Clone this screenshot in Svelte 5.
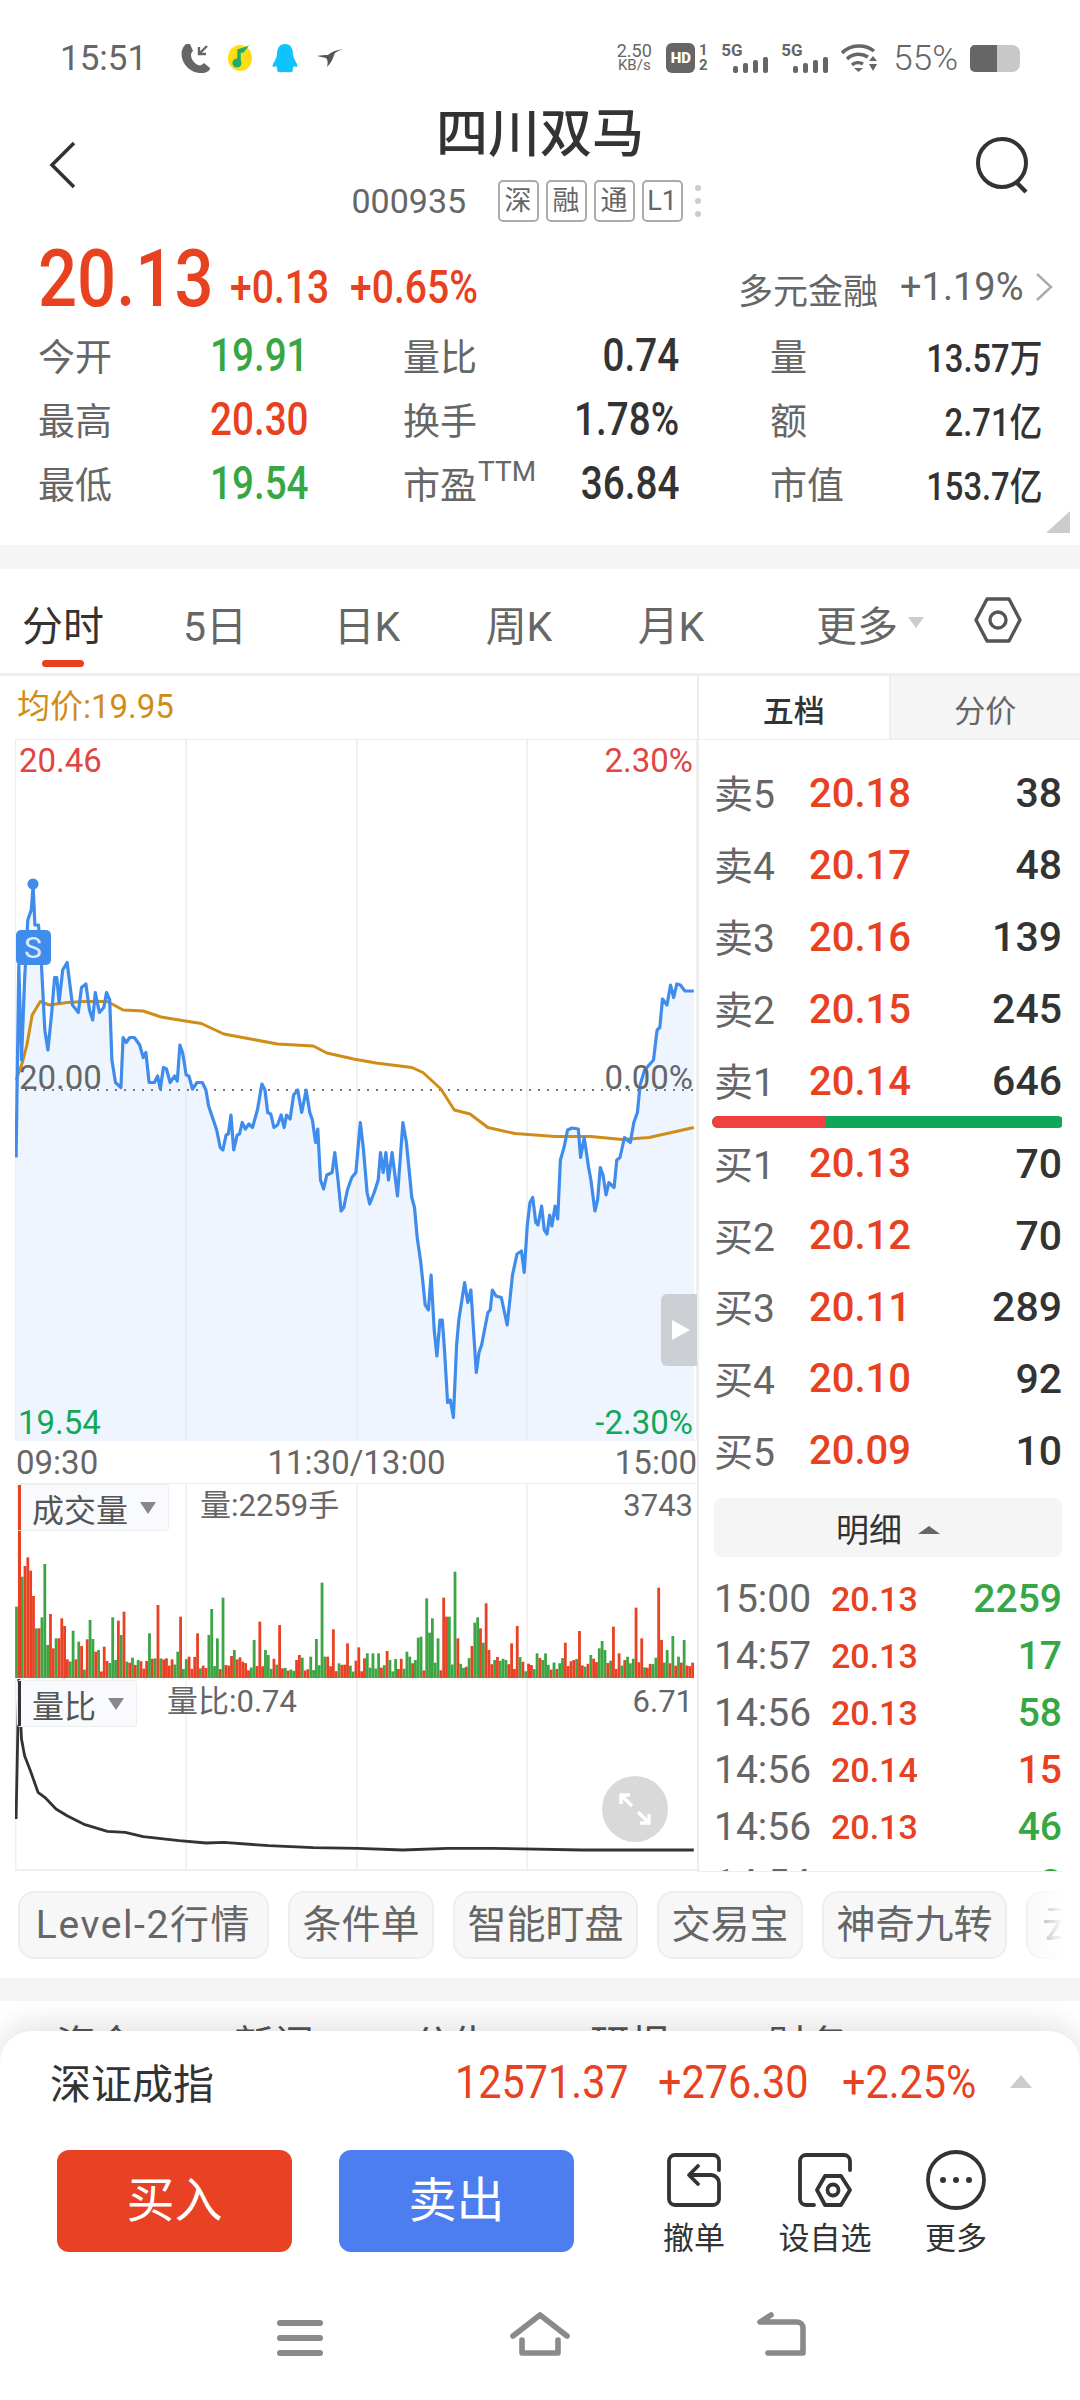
<script>
  const sx = 2.234;

  const stats = [
    [["今开", "19.91", "g"], ["量比", "0.74", ""], ["量", "13.57万", ""]],
    [["最高", "20.30", "r"], ["换手", "1.78%", ""], ["额", "2.71亿", ""]],
    [["最低", "19.54", "g"], ["市盈", "36.84", "", "TTM"], ["市值", "153.7亿", ""]]
  ];

  const tabs = ["分时", "5日", "日K", "周K", "月K"];

  const sells = [
    ["卖5", "20.18", "38"],
    ["卖4", "20.17", "48"],
    ["卖3", "20.16", "139"],
    ["卖2", "20.15", "245"],
    ["卖1", "20.14", "646"]
  ];
  const buys = [
    ["买1", "20.13", "70"],
    ["买2", "20.12", "70"],
    ["买3", "20.11", "289"],
    ["买4", "20.10", "92"],
    ["买5", "20.09", "10"]
  ];
  const ticks = [
    ["15:00", "20.13", "2259", "g"],
    ["14:57", "20.13", "17", "g"],
    ["14:56", "20.13", "58", "g"],
    ["14:56", "20.14", "15", "r"],
    ["14:56", "20.13", "46", "g"],
    ["14:54", "20.13", "3", "g"]
  ];

  const chips = [
    ["Level-2行情", 251],
    ["条件单", 146],
    ["智能盯盘", 185],
    ["交易宝", 146],
    ["神奇九转", 185],
    ["云", 120]
  ];

  // traced from the reference, in crop coordinates
  const priceRaw = [36,915,42,530,48,720,55,560,62,440,70,420,74,370,78,450,86,450,92,520,100,660,107,700,115,630,122,555,127,555,132,605,140,540,150,525,162,610,175,625,182,575,192,568,200,620,207,640,213,585,222,625,232,615,238,585,245,600,250,720,258,765,270,775,275,675,282,685,290,675,300,675,312,690,320,715,326,705,333,765,345,765,352,752,358,778,365,735,372,738,380,765,390,752,396,762,402,690,408,705,416,750,422,752,430,778,440,765,452,765,460,780,466,812,484,860,492,895,498,900,505,870,510,868,516,830,522,900,530,870,535,868,541,845,548,858,556,848,564,855,575,820,585,768,592,780,598,825,605,828,612,855,620,850,628,830,635,855,640,830,648,838,656,790,665,780,674,825,684,780,692,825,698,840,705,885,710,858,716,960,723,978,730,950,742,945,748,905,755,960,762,1022,768,1015,776,980,786,955,795,945,805,845,812,900,820,985,826,1008,836,985,845,960,850,905,856,945,862,905,868,960,876,905,888,992,900,845,908,885,920,995,926,1015,932,1075,940,1125,950,1210,957,1220,963,1150,970,1260,976,1312,983,1240,988,1240,993,1300,1000,1405,1006,1400,1013,1435,1020,1290,1025,1240,1038,1165,1045,1205,1052,1180,1064,1345,1070,1305,1076,1290,1090,1225,1095,1220,1100,1180,1108,1192,1120,1195,1133,1250,1145,1150,1155,1108,1165,1102,1171,1145,1178,1050,1184,1005,1190,995,1197,1045,1202,1050,1210,1012,1216,1060,1222,1068,1228,1030,1233,1052,1240,1012,1246,1038,1252,920,1260,895,1268,860,1278,856,1292,858,1297,915,1305,875,1315,935,1320,960,1329,1022,1335,1000,1341,935,1347,950,1354,990,1360,965,1372,975,1378,920,1385,915,1395,875,1408,885,1416,845,1424,825,1430,770,1440,740,1460,720,1468,660,1474,655,1480,598,1490,610,1498,570,1505,595,1512,568,1520,570,1530,582,1550,582];
  const avgRaw = [36,760,50,725,60,690,72,630,90,603,110,610,150,605,190,603,240,603,275,620,320,622,360,634,400,640,450,647,500,668,560,678,620,688,700,692,730,706,790,718,840,726,920,735,945,745,985,778,1015,820,1050,828,1090,855,1150,867,1240,873,1320,873,1390,879,1450,875,1550,855];
  const ratioRaw = [36,1080,42,660,48,840,55,890,68,935,85,1000,100,1015,125,1050,150,1070,190,1097,240,1117,280,1120,320,1133,400,1145,460,1152,500,1150,600,1160,700,1166,800,1168,900,1173,1000,1168,1100,1168,1300,1173,1550,1173];

  const toPts = (raw, yf) => {
    const out = [];
    for (let i = 0; i < raw.length; i += 2) {
      out.push(`${(raw[i] / sx - 15).toFixed(1)},${yf(raw[i + 1]).toFixed(1)}`);
    }
    return out.join(" ");
  };

  const priceY = z => z / 2 + 700 - 739;
  const price = toPts(priceRaw, priceY);
  const avg = toPts(avgRaw, priceY);
  const area = `1,702 ${price} 679,702`;
  const ratio = toPts(ratioRaw, z => 1460 + z / 3 - 1680);

  const reds = [43,215,55,318,62,292,68,332,75,408,86,505,112,462,120,565,130,535,137,475,144,498,152,598,170,598,182,558,195,538,210,575,232,560,265,482,276,455,328,603,352,435,368,595,385,598,403,470,420,590,440,520,505,615,515,588,525,600,540,605,578,485,622,495,660,600,668,585,730,590,742,508,775,550,800,562,862,573,988,413,998,470,1020,535,1052,558,1070,505,1083,430,1090,570,1140,550,1152,498,1185,615,1265,548,1280,600,1291,513,1367,500,1380,580,1417,443,1430,535,1468,383,1480,540,1500,480,1550,300];
  const greens = [37,440,48,350,82,505,94,472,100,312,106,555,127,535,162,512,175,545,200,480,207,537,220,570,250,472,258,600,268,525,282,605,307,600,333,520,395,575,445,625,463,525,472,447,485,535,497,413,520,570,565,540,592,570,600,585,695,590,705,537,717,368,722,590,755,610,817,580,830,580,845,580,882,597,905,575,912,590,932,533,940,530,950,415,957,518,968,475,975,535,1005,470,1013,335,1060,488,1065,472,1076,548,1106,600,1128,600,1197,580,1210,600,1220,580,1305,620,1322,585,1335,565,1347,543,1353,570,1405,610,1490,570,1505,528,1518,590,1528,540];

  const barStep = 6.32;
  const bars = [];
  for (let i = 0; i < 240; i++) {
    const n = Math.abs(Math.sin(i * 12.9898) * 43758.5453) % 1;
    const m = Math.abs(Math.sin(i * 78.233) * 12543.37) % 1;
    bars.push({ top: 590 + n * 45, red: m > 0.45 });
  }
  const mark = (list, red) => {
    for (let i = 0; i < list.length; i += 2) {
      const k = Math.round((list[i] - 36) / barStep);
      if (bars[k]) bars[k] = { top: list[i + 1], red };
    }
  };
  mark(reds, true);
  mark(greens, false);
  const volBars = bars.map((b, i) => {
    const y = 1460 + b.top / 3 - 1483;
    return { x: (36 + i * barStep) / sx - 15 - 1, y, h: 195 - y, red: b.red };
  });
</script>

<div class="page">
  <div class="status">
    <span class="clock">15:51</span>
    <svg class="ic-phone" viewBox="0 0 30 30" width="30" height="30">
      <path d="M6 1 C1 5 0 13 4 20 C8 27 16 31 24 30 C28 29 30 27 30 25 L24 20 C22 22 20 23 18 22 C14 20 11 16 11 12 C11 10 12 9 13 8 L10 1 Z" fill="#666" />
      <path d="M27 3 L19 11 M19 4 V11 H26" fill="none" stroke="#666" stroke-width="2.4" />
    </svg>
    <svg class="ic-music" viewBox="0 0 24 26" width="24" height="26">
      <ellipse cx="12" cy="13" rx="12" ry="13" fill="#ffdc14" />
      <path d="M10 16 V5 L19 2 L15 7 L12 7 V18" fill="#1fae6a" stroke="#1fae6a" stroke-width="1.5" />
      <circle cx="9" cy="18" r="4.6" fill="#1fae6a" />
    </svg>
    <svg class="ic-qq" viewBox="0 0 26 29" width="26" height="29">
      <path d="M13 0 C7 0 5 5 5 10 C5 13 3 16 1 20 C0 23 1 24 4 22 C5 24 6 26 5 27 C7 29 10 28 13 28 C16 28 19 29 21 27 C20 26 21 24 22 22 C25 24 26 23 25 20 C23 16 21 13 21 10 C21 5 19 0 13 0 Z" fill="#10c4fb" />
    </svg>
    <svg class="ic-bird" viewBox="0 0 26 18" width="26" height="18">
      <path d="M0 7 C4 6 8 6 11 6 C14 3 19 1 26 0 C21 2 18 3 17 6 C16 10 14 14 10 18 C11 14 11 11 9 9 C6 8 3 8 0 7 Z" fill="#555" />
    </svg>

    <span class="speed"><b>2.50</b><i>KB/s</i></span>
    <span class="hd">HD</span>
    <span class="sim"><b>1</b><b>2</b></span>
    <span class="sig first">
      <b>5G</b>
      <svg viewBox="0 0 35 16" width="35" height="16"><rect x="0" y="9" width="5" height="7" rx="2" /><rect x="10" y="6" width="5" height="10" rx="2" /><rect x="20" y="3" width="5" height="13" rx="2" /><rect x="30" y="0" width="5" height="16" rx="2" /></svg>
    </span>
    <span class="sig">
      <b>5G</b>
      <svg viewBox="0 0 35 16" width="35" height="16"><rect x="0" y="9" width="5" height="7" rx="2" /><rect x="10" y="6" width="5" height="10" rx="2" /><rect x="20" y="3" width="5" height="13" rx="2" /><rect x="30" y="0" width="5" height="16" rx="2" /></svg>
    </span>
    <svg class="ic-wifi" viewBox="0 0 36 28" width="36" height="28">
      <path d="M1 9 C10 0 24 0 33 7 M6 15 C12 9 21 9 27 13 M11 21 C14 18 19 18 22 20" fill="none" stroke="#666" stroke-width="3.4" />
      <path d="M13 24 H22 L17.5 28 Z M28 17 H36 L32 12 Z M28 20 H36 L32 27 Z" fill="#666" />
    </svg>
    <span class="batt-txt">55%</span>
    <span class="batt"><span class="batt-fill"></span></span>
  </div>

  <div class="head">
    <svg class="back" viewBox="0 0 30 48" width="30" height="48">
      <path d="M26 2 L4 24 L26 46" fill="none" stroke="#333" stroke-width="3.6" />
    </svg>
    <div class="head-mid">
      <div class="title">四川双马</div>
      <div class="code-row">
        <span class="code">000935</span>
        <span class="tag">深</span>
        <span class="tag">融</span>
        <span class="tag">通</span>
        <span class="tag">L1</span>
        <span class="dots"><i></i><i></i><i></i></span>
      </div>
    </div>
    <svg class="search" viewBox="0 0 58 58" width="58" height="58">
      <circle cx="28" cy="27" r="24" fill="none" stroke="#333" stroke-width="4" />
      <path d="M42 46 L52 56" stroke="#333" stroke-width="4.4" />
    </svg>
  </div>

  <div class="quote">
    <div class="price-row">
      <span class="big"><span>20.13</span></span>
      <span class="chg c1"><span>+0.13</span></span>
      <span class="chg c2"><span>+0.65%</span></span>
      <span class="sector">多元金融</span>
      <span class="sector-v">+1.19%</span>
      <svg class="more" viewBox="0 0 18 30" width="18" height="30"><path d="M2 2 L16 15 L2 28" fill="none" stroke="#aaa" stroke-width="2.4" /></svg>
    </div>
    <div class="stats">
      {#each stats as row}
        <div class="stat-row">
          {#each row as s, i}
            <div class="stat s{i}">
              <span class="lab">{s[0]}{#if s[3]}<sup>{s[3]}</sup>{/if}</span>
              <span class="val {s[2]}">{s[1]}</span>
            </div>
          {/each}
        </div>
      {/each}
    </div>
    <svg class="corner" viewBox="0 0 24 22" width="24" height="22"><path d="M24 0 V22 H0 Z" fill="#ccc" /></svg>
  </div>

  <div class="band"></div>

  <div class="tabs">
    {#each tabs as t, i}
      <div class="tab" class:on={i === 0}>{t}</div>
    {/each}
    <div class="tab-more">更多<i></i></div>
    <svg class="hex" viewBox="0 0 50 48" width="50" height="48">
      <path d="M14 3 H36 L47 24 L36 45 H14 L3 24 Z" fill="none" stroke="#555" stroke-width="3.4" stroke-linejoin="round" />
      <circle cx="25" cy="24" r="8" fill="none" stroke="#555" stroke-width="3.4" />
    </svg>
  </div>

  <div class="main">
    <div class="left">
      <div class="avg">均价:19.95</div>

      <svg class="chart" viewBox="0 0 682 702" width="682" height="702">
        <rect x="0.5" y="0.5" width="681" height="701" fill="#fff" stroke="#eee" />
        <polygon points={area} fill="#eef5fe" />
        <path d="M171 0 V702 M342 0 V702 M512 0 V702" stroke="#e9ecef" stroke-width="1.5" fill="none" />
        <path d="M1 351 H681" stroke="#777" stroke-width="2" stroke-dasharray="2 7" fill="none" />
        <polyline points={avg} fill="none" stroke="#cf8d18" stroke-width="3" stroke-linejoin="round" />
        <polyline points={price} fill="none" stroke="#3f8cec" stroke-width="3.2" stroke-linejoin="round" />
        <ellipse cx="18" cy="145" rx="5.5" ry="5.5" fill="#3f8cec" />
        <rect x="1" y="191" width="35" height="35" rx="5" fill="#3f8cec" />
        <text x="18" y="219" class="s-mark" text-anchor="middle">S</text>
        <text x="4" y="33" class="tx red">20.46</text>
        <text x="678" y="33" class="tx red" text-anchor="end">2.30%</text>
        <text x="4" y="350" class="tx grey">20.00</text>
        <text x="678" y="350" class="tx grey" text-anchor="end">0.00%</text>
        <text x="3" y="695" class="tx green">19.54</text>
        <text x="678" y="695" class="tx green" text-anchor="end">-2.30%</text>
        <rect x="646" y="555" width="40" height="72" rx="6" fill="#ccd0d5" />
        <path d="M657 581 L675 591 L657 601 Z" fill="#fff" />
      </svg>

      <div class="times">
        <span>09:30</span>
        <span>11:30/13:00</span>
        <span>15:00</span>
      </div>

      <div class="sub vol">
        <svg viewBox="0 0 682 196" width="682" height="196">
          <path d="M171 0 V196 M342 0 V196 M512 0 V196" stroke="#eee" stroke-width="1.5" fill="none" />
          <path d="M0 0.5 H682" stroke="#eee" />
          {#each volBars as b}
            <rect x={b.x} y={b.y} width="2.8" height={b.h} fill={b.red ? "#e84124" : "#3ea545"} />
          {/each}
          <rect x="3" y="2" width="3" height="193" fill="#e84124" />
        </svg>
        <div class="ind">成交量<i></i></div>
        <div class="ind-v">量:2259手</div>
        <div class="ind-max">3743</div>
      </div>

      <div class="sub ratio">
        <svg viewBox="0 0 682 192" width="682" height="192">
          <path d="M171 0 V192 M342 0 V192 M512 0 V192" stroke="#eee" stroke-width="1.5" fill="none" />
          <path d="M0.5 0 V192 M0 191 H682" stroke="#eee" stroke-width="2" />
          <polyline points={ratio} fill="none" stroke="#333" stroke-width="2.8" stroke-linejoin="round" />
        </svg>
        <div class="ind">量比<i></i></div>
        <div class="ind-v">量比:0.74</div>
        <div class="ind-max">6.71</div>
        <div class="expand">
          <svg viewBox="0 0 44 44" width="44" height="44">
            <path d="M8 17 V8 H17 M8 8 L19 19 M36 27 V36 H27 M36 36 L25 25" fill="none" stroke="#fff" stroke-width="3.4" />
          </svg>
        </div>
      </div>
    </div>

    <div class="right">
      <div class="rtabs">
        <div class="rtab on">五档</div>
        <div class="rtab">分价</div>
      </div>
      <div class="book">
        {#each sells as r}
          <div class="ob"><span class="ob-l">{r[0]}</span><span class="ob-p">{r[1]}</span><span class="ob-q">{r[2]}</span></div>
        {/each}
        <div class="ratio-bar"><span></span></div>
        {#each buys as r}
          <div class="ob buy"><span class="ob-l">{r[0]}</span><span class="ob-p">{r[1]}</span><span class="ob-q">{r[2]}</span></div>
        {/each}
        <div class="detail">明细<i></i></div>
        {#each ticks as t}
          <div class="tick">
            <span class="t-time">{t[0]}</span>
            <span class="t-price">{t[1]}</span>
            <span class="t-qty {t[3]}">{t[2]}</span>
          </div>
        {/each}
      </div>
    </div>
  </div>

  <div class="chips">
    {#each chips as c}
      <div class="chip" style="width:{c[1]}px">{c[0]}</div>
    {/each}
    <div class="chip-fade"></div>
  </div>

  <div class="band b2"></div>

  <div class="peek">
    <span>资金</span><span>新闻</span><span>公告</span><span>研报</span><span>财务</span>
  </div>

  <div class="sheet">
    <div class="index">
      <span class="idx-name">深证成指</span>
      <span class="idx a"><span>12571.37</span></span>
      <span class="idx b"><span>+276.30</span></span>
      <span class="idx c"><span>+2.25%</span></span>
      <svg viewBox="0 0 22 13" width="22" height="13"><path d="M11 0 L22 13 H0 Z" fill="#ccc" /></svg>
    </div>
    <div class="actions">
      <div class="btn buy-btn">买入</div>
      <div class="btn sell-btn">卖出</div>
      <div class="act a1">
        <svg viewBox="0 0 54 54" width="54" height="54">
          <path d="M52 17 V8 A6 6 0 0 0 46 2 H8 A6 6 0 0 0 2 8 V46 A6 6 0 0 0 8 52 H46 A6 6 0 0 0 52 46 V30 A8 8 0 0 0 44 22 H24 M31 13 L22 22 L31 31" fill="none" stroke="#333" stroke-width="3.8" stroke-linecap="round" stroke-linejoin="round" />
        </svg>
        <span>撤单</span>
      </div>
      <div class="act a2">
        <svg viewBox="0 0 54 54" width="54" height="54">
          <path d="M52 17 V8 A6 6 0 0 0 46 2 H8 A6 6 0 0 0 2 8 V46 A6 6 0 0 0 8 52 H16" fill="none" stroke="#333" stroke-width="3.8" stroke-linecap="round" />
          <path d="M27 23 H43 L52 37 L43 52 H27 L19 37 Z" fill="none" stroke="#333" stroke-width="3.8" stroke-linejoin="round" />
          <circle cx="35" cy="37" r="5.5" fill="none" stroke="#333" stroke-width="3.8" />
        </svg>
        <span>设自选</span>
      </div>
      <div class="act a3">
        <svg viewBox="0 0 60 60" width="60" height="60">
          <circle cx="30" cy="30" r="28" fill="none" stroke="#333" stroke-width="3.8" />
          <circle cx="17" cy="30" r="3" fill="#333" /><circle cx="30" cy="30" r="3" fill="#333" /><circle cx="43" cy="30" r="3" fill="#333" />
        </svg>
        <span>更多</span>
      </div>
    </div>
    <div class="nav">
      <svg viewBox="0 0 46 36" width="46" height="36" fill="#8a8a8a">
        <rect x="0" y="0" width="46" height="6" rx="3" /><rect x="0" y="15" width="46" height="6" rx="3" /><rect x="0" y="30" width="46" height="6" rx="3" />
      </svg>
      <svg viewBox="0 0 60 44" width="60" height="44">
        <path d="M3 24 L30 3 L57 24 M12 28 V41 H48 V28" fill="none" stroke="#8a8a8a" stroke-width="5.6" stroke-linecap="round" stroke-linejoin="round" />
      </svg>
      <svg viewBox="0 0 50 44" width="50" height="44">
        <path d="M14 3 L3 10 H40 A6 6 0 0 1 46 16 V41 H11" fill="none" stroke="#8a8a8a" stroke-width="5.6" stroke-linecap="round" stroke-linejoin="round" />
      </svg>
    </div>
  </div>
</div>

<style>
  :global(body) {
    margin: 0;
    background: #fff;
  }
  .page {
    width: 1080px;
    height: 2400px;
    overflow: hidden;
    background: #fff;
    font-family: Roboto, "Noto Sans CJK SC", sans-serif;
    color: #333;
  }
  i {
    font-style: normal;
  }

  /* status bar */
  .status {
    height: 90px;
    display: flex;
    align-items: center;
    padding: 26px 60px 0 60px;
    box-sizing: border-box;
    color: #666;
  }
  .clock {
    font-size: 35px;
    width: 120px;
  }
  .ic-music {
    margin-left: 18px;
  }
  .ic-qq {
    margin-left: 20px;
  }
  .ic-bird {
    margin-left: 19px;
    margin-right: auto;
  }
  .speed {
    display: flex;
    flex-direction: column;
    align-items: center;
    line-height: 15px;
    width: 40px;
  }
  .speed b {
    font-size: 18px;
    font-weight: 400;
  }
  .speed i {
    font-size: 15px;
  }
  .hd {
    margin-left: 12px;
    width: 29px;
    height: 30px;
    border-radius: 6px;
    background: #666;
    color: #fff;
    font-size: 15px;
    font-weight: 900;
    line-height: 30px;
    text-align: center;
  }
  .sim {
    display: flex;
    flex-direction: column;
    align-items: center;
    width: 12px;
    line-height: 15px;
    font-size: 15px;
    margin-left: 2px;
  }
  .sig {
    display: flex;
    flex-direction: column;
    width: 47px;
    margin-left: 13px;
    line-height: 14px;
    font-size: 17px;
    fill: #666;
  }
  .sig.first {
    margin-left: 12px;
  }
  .sig svg {
    align-self: flex-end;
  }
  .ic-wifi {
    margin-left: 13px;
  }
  .batt-txt {
    margin-left: 16px;
    font-size: 35px;
    font-weight: 300;
  }
  .batt {
    margin-left: 12px;
    width: 50px;
    height: 27px;
    border-radius: 5px 8px 8px 5px;
    background: #c8c8c8;
    display: block;
    overflow: hidden;
  }
  .batt-fill {
    display: block;
    width: 27px;
    height: 100%;
    background: #666;
  }

  /* header */
  .head {
    height: 145px;
    display: flex;
    align-items: flex-start;
    padding: 0 48px;
    box-sizing: border-box;
    position: relative;
  }
  .back {
    margin-top: 51px;
  }
  .search {
    margin-top: 46px;
  }
  .head-mid {
    flex: 1;
    display: flex;
    flex-direction: column;
    align-items: center;
  }
  .title {
    font-size: 52px;
    font-weight: 500;
    line-height: 90px;
    height: 90px;
    margin-left: 28px;
  }
  .code-row {
    display: flex;
    align-items: center;
    gap: 7px;
  }
  .code {
    font-size: 34px;
    color: #666;
    width: 139px;
  }
  .tag {
    width: 37px;
    height: 38px;
    border: 2px solid #aaa;
    border-radius: 5px;
    font-size: 27px;
    line-height: 38px;
    text-align: center;
    color: #666;
    box-sizing: content-box;
  }
  .dots {
    display: flex;
    flex-direction: column;
    gap: 7px;
    margin-left: 5px;
  }
  .dots i {
    display: block;
    width: 6px;
    height: 6px;
    border-radius: 3px;
    background: #ccc;
  }

  /* quote */
  .quote {
    position: relative;
    height: 310px;
  }
  .price-row {
    height: 88px;
    display: flex;
    align-items: center;
    padding-left: 38px;
    color: #e8411f;
  }
  .big {
    width: 192px;
    font-size: 80px;
    font-weight: 500;
    line-height: 88px;
  }
  .big span,
  .chg span,
  .idx span {
    display: inline-block;
    transform-origin: left center;
    white-space: nowrap;
  }
  .big span {
    transform: scaleX(0.86);
  }
  .chg {
    font-size: 46px;
    font-weight: 500;
    padding-top: 16px;
  }
  .chg span {
    transform: scaleX(0.85);
  }
  .c1 {
    width: 120px;
  }
  .c2 {
    width: 388px;
  }
  .sector {
    font-size: 35px;
    color: #666;
    padding-top: 18px;
    width: 162px;
  }
  .sector-v {
    font-size: 38px;
    color: #666;
    padding-top: 16px;
    width: 135px;
    font-weight: 400;
  }
  .more {
    margin-top: 16px;
  }
  .stat-row {
    display: flex;
    height: 64px;
    align-items: center;
    padding-left: 38px;
  }
  .stat {
    display: flex;
    align-items: center;
    justify-content: space-between;
  }
  .s0 {
    width: 172px;
    margin-right: 193px;
    white-space: nowrap;
  }
  .s1 {
    width: 276px;
    margin-right: 91px;
  }
  .s2 {
    width: 272px;
  }
  .lab {
    font-size: 37px;
    color: #666;
    white-space: nowrap;
  }
  .lab sup {
    font-size: 28px;
    line-height: 0;
    vertical-align: 18px;
    margin-left: 1px;
  }
  .val {
    display: inline-block;
    font-size: 46px;
    font-weight: 500;
    transform: scaleX(0.84);
    transform-origin: right center;
    white-space: nowrap;
  }
  .s0 .val {
    flex: none;
    transform-origin: left center;
    margin-left: 98px;
    margin-right: -116px;
  }
  .s2 .val {
    font-size: 39px;
  }
  .val.g {
    color: #36a744;
  }
  .val.r {
    color: #e8411f;
  }
  .corner {
    position: absolute;
    right: 10px;
    bottom: 12px;
  }
  .band {
    height: 24px;
    background: #f5f5f5;
  }

  /* period tabs */
  .tabs {
    height: 107px;
    display: flex;
    align-items: center;
    box-sizing: border-box;
    border-bottom: 3px solid #eee;
    padding-top: 3px;
  }
  .tab {
    width: 152px;
    flex: none;
    font-size: 41px;
    text-align: center;
    color: #666;
    position: relative;
  }
  .tab:first-child {
    margin-left: -13px;
  }
  .tab.on {
    color: #333;
  }
  .tab.on::after {
    content: "";
    position: absolute;
    left: 55px;
    bottom: -14px;
    width: 42px;
    height: 7px;
    border-radius: 4px;
    background: #e8411f;
  }
  .tab-more {
    margin-left: 69px;
    font-size: 41px;
    color: #666;
    display: flex;
    align-items: center;
    white-space: nowrap;
  }
  .tab-more i {
    margin-left: 10px;
    border-left: 8px solid transparent;
    border-right: 8px solid transparent;
    border-top: 11px solid #ccc;
  }
  .hex {
    margin-left: 49px;
    margin-top: -6px;
  }

  /* main split */
  .main {
    display: flex;
    height: 1196px;
  }
  .left {
    width: 697px;
    flex: none;
    padding-left: 15px;
    box-sizing: border-box;
  }
  .avg {
    height: 63px;
    margin-left: 2px;
    font-size: 33px;
    line-height: 62px;
    color: #cf8d18;
  }
  .chart,
  .sub svg {
    display: block;
  }
  .tx {
    font-size: 33px;
    font-family: Roboto, sans-serif;
  }
  .tx.red {
    fill: #e04545;
  }
  .tx.grey {
    fill: #666;
  }
  .tx.green {
    fill: #12a85a;
  }
  .s-mark {
    font-size: 30px;
    fill: #dfeaf8;
    font-family: Roboto, sans-serif;
  }
  .times {
    height: 42px;
    display: flex;
    justify-content: space-between;
    align-items: center;
    font-size: 33px;
    color: #666;
    padding-left: 1px;
  }
  .sub {
    position: relative;
  }
  .ind {
    position: absolute;
    left: 2px;
    top: 1px;
    padding: 0 12px 0 14px;
    height: 45px;
    display: flex;
    align-items: center;
    background: #f9fafd;
    border: 1.5px solid #eee;
    border-radius: 3px;
    font-size: 32px;
    color: #555;
  }
  .ind::before {
    content: "";
    position: absolute;
    left: 0;
    top: 0;
    width: 3px;
    height: 100%;
  }
  .vol .ind::before {
    background: #e84124;
  }
  .ratio .ind::before {
    background: #333;
  }
  .ind i {
    margin-left: 12px;
    border-left: 8px solid transparent;
    border-right: 8px solid transparent;
    border-top: 12px solid #888;
  }
  .ind-v {
    position: absolute;
    top: 2px;
    left: 185px;
    font-size: 31px;
    color: #666;
    line-height: 42px;
  }
  .ratio .ind-v {
    left: 152px;
  }
  .ind-max {
    position: absolute;
    top: 2px;
    right: 4px;
    font-size: 31px;
    color: #666;
    line-height: 42px;
  }
  .expand {
    position: absolute;
    right: 29px;
    top: 97px;
    width: 66px;
    height: 66px;
    border-radius: 50%;
    background: #d9d9d9;
    display: flex;
    align-items: center;
    justify-content: center;
  }

  /* right panel */
  .right {
    flex: 1;
    border-left: 2px solid #eee;
    overflow: hidden;
  }
  .rtabs {
    display: flex;
    height: 63px;
    border-bottom: 1px solid #eee;
  }
  .rtab {
    flex: 1;
    font-size: 31px;
    line-height: 72px;
    text-align: center;
    color: #666;
    background: #f5f5f5;
    border-left: 2px solid #eee;
  }
  .rtab.on {
    background: #fff;
    color: #333;
    font-weight: 500;
    border-left: 0;
  }
  .book {
    padding: 17px 0 0 15px;
    width: 348px;
    height: 1114px;
    box-sizing: content-box;
    overflow: hidden;
    border-bottom: 2px solid #eee;
  }
  .ob {
    height: 72px;
    display: flex;
    align-items: center;
    font-weight: 500;
    font-size: 41px;
  }
  .ob.buy {
    height: 71.7px;
  }
  .ob-l {
    width: 95px;
    font-size: 39px;
    font-weight: 400;
    color: #666;
    position: relative;
    top: -2px;
  }
  .ob-p {
    color: #e8411f;
    font-size: 40px;
  }
  .ob-q {
    margin-left: auto;
  }
  .ratio-bar {
    height: 12px;
    margin: -1px 0 0;
    border-radius: 6px;
    background: #10a858;
    overflow: hidden;
    position: relative;
    left: -2px;
    width: 352px;
  }
  .ratio-bar span {
    display: block;
    width: 113px;
    height: 100%;
    background: #f04040;
  }
  .detail {
    margin-top: 12px;
    height: 59px;
    border-radius: 8px;
    background: #f5f5f5;
    display: flex;
    align-items: center;
    justify-content: center;
    font-size: 33px;
    color: #333;
  }
  .detail i {
    margin-left: 16px;
    margin-top: 4px;
    border-left: 11px solid transparent;
    border-right: 11px solid transparent;
    border-bottom: 8px solid #666;
  }
  .detail + .tick {
    margin-top: 13px;
  }
  .tick {
    height: 57px;
    display: flex;
    align-items: center;
    font-weight: 500;
    font-size: 39px;
  }
  .t-time {
    width: 117px;
    font-weight: 400;
    color: #666;
  }
  .t-price {
    font-size: 34px;
    color: #e8411f;
  }
  .t-qty {
    margin-left: auto;
  }
  .t-qty.g {
    color: #36a744;
  }
  .t-qty.r {
    color: #e8411f;
  }

  /* chips */
  .chips {
    position: relative;
    width: 1063px;
    margin-top: 19px;
    height: 68px;
    padding-left: 18px;
    box-sizing: border-box;
    display: flex;
    gap: 19px;
    overflow: hidden;
  }
  .chip {
    flex: none;
    box-sizing: border-box;
    height: 68px;
    background: #f7f7f7;
    border: 2px solid #eee;
    border-radius: 16px;
    font-size: 39px;
    line-height: 64px;
    text-align: center;
    color: #666;
    white-space: nowrap;
  }
  .chip:nth-child(1) {
    letter-spacing: 1.6px;
  }
  .chip:nth-child(6) {
    text-align: left;
    padding-left: 14px;
  }
  .chip-fade {
    position: absolute;
    right: 0;
    top: 0;
    width: 36px;
    height: 68px;
    background: linear-gradient(to right, rgba(255, 255, 255, 0.3), #fff);
  }
  .b2 {
    margin-top: 19px;
    height: 23px;
  }

  /* peek of the tabs under the sheet */
  .peek {
    height: 30px;
    overflow: hidden;
    display: flex;
    padding: 20px 0 0 56px;
    box-sizing: border-box;
    gap: 98px;
    font-size: 40px;
    line-height: 50px;
    color: #555;
  }

  /* bottom sheet */
  .sheet {
    height: 369px;
    background: #fff;
    border-radius: 32px 32px 0 0;
    box-shadow: 0 -6px 30px rgba(0, 0, 0, 0.12);
    position: relative;
    box-sizing: border-box;
    padding-top: 28px;
  }
  .index {
    height: 44px;
    display: flex;
    align-items: center;
    padding-left: 50px;
  }
  .idx-name {
    font-size: 41px;
    width: 405px;
    color: #333;
  }
  .idx {
    font-size: 47px;
    color: #e8411f;
  }
  .idx span {
    transform: scaleX(0.88);
  }
  .idx.a {
    width: 203px;
  }
  .idx.b {
    width: 184px;
  }
  .idx.c {
    width: 168px;
  }
  .actions {
    display: flex;
    align-items: flex-start;
    margin-top: 47px;
    padding-left: 57px;
  }
  .btn {
    width: 235px;
    height: 102px;
    border-radius: 12px;
    color: #fff;
    font-size: 48px;
    line-height: 102px;
    text-align: center;
  }
  .buy-btn {
    background: #e84124;
  }
  .sell-btn {
    background: #4c7ef0;
    margin-left: 47px;
  }
  .act {
    display: flex;
    flex-direction: column;
    align-items: center;
    font-size: 31px;
    color: #333;
    width: 100px;
    margin-top: 3px;
  }
  .act span {
    margin-top: 14px;
    line-height: 36px;
    white-space: nowrap;
  }
  .a1 {
    margin-left: 70px;
  }
  .a2 {
    margin-left: 31px;
  }
  .a3 {
    margin-left: 31px;
    margin-top: 0;
  }
  .a3 span {
    margin-top: 11px;
  }
  .nav {
    position: absolute;
    left: 277px;
    top: 281px;
    width: 530px;
    display: flex;
    justify-content: space-between;
    align-items: flex-end;
  }
</style>
